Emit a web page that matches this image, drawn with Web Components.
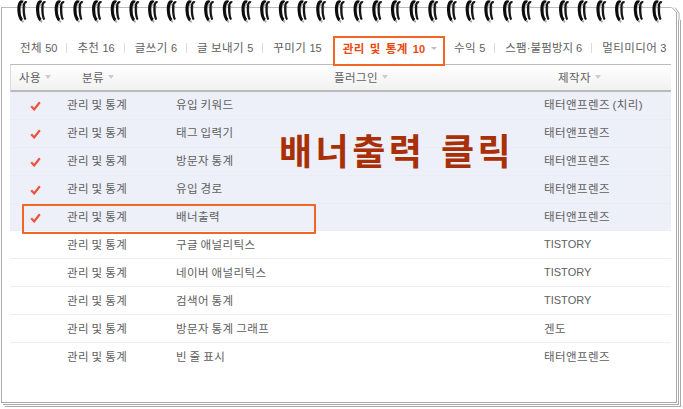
<!DOCTYPE html>
<html lang="ko">
<head>
<meta charset="utf-8">
<title>플러그인</title>
<style>
	html, body { margin: 0; background: #fff; }
	body { width: 683px; height: 409px; overflow: hidden; font-family: "Liberation Sans", "Noto Sans CJK KR", sans-serif; }
</style>
</head>
<body>
<note-paper>
	<plugin-tabs>
		<tab-item>전체 <b>50</b></tab-item>
		<tab-item>추천 <b>16</b></tab-item>
		<tab-item>글쓰기 <b>6</b></tab-item>
		<tab-item>글 보내기 <b>5</b></tab-item>
		<tab-item last>꾸미기 <b>15</b></tab-item>
		<tab-item active>관리 및 통계 <b>10</b></tab-item>
		<tab-item style="padding-left:9px">수익 <b>5</b></tab-item>
		<tab-item style="letter-spacing:.1px">스팸·불펌방지 <b>6</b></tab-item>
		<tab-item last>멀티미디어 <b>3</b></tab-item>
	</plugin-tabs>
	<plugin-table>
		<plugin-row on name="유입 키워드" by="태터앤프렌즈 (치리)"></plugin-row>
		<plugin-row on name="태그 입력기" by="태터앤프렌즈"></plugin-row>
		<plugin-row on name="방문자 통계" by="태터앤프렌즈"></plugin-row>
		<plugin-row on name="유입 경로" by="태터앤프렌즈"></plugin-row>
		<plugin-row on mark name="배너출력" by="태터앤프렌즈"></plugin-row>
		<plugin-row name="구글 애널리틱스" by="TISTORY"></plugin-row>
		<plugin-row name="네이버 애널리틱스" by="TISTORY"></plugin-row>
		<plugin-row name="검색어 통계" by="TISTORY"></plugin-row>
		<plugin-row name="방문자 통계 그래프" by="겐도"></plugin-row>
		<plugin-row name="빈 줄 표시" by="태터앤프렌즈"></plugin-row>
	</plugin-table>
	<big-note>배너출력 클릭</big-note>
</note-paper>
<script>
'use strict';
((window, document) => {
	const FONT = '"Liberation Sans", "Noto Sans CJK KR", sans-serif';

	// one wire of the binding, repeated along the top edge
	class SpiralRings extends HTMLElement {
		constructor() {
			super();
			let shadowRoot = this.attachShadow({mode: 'open'});
			let wires = '';
			for (let i = 0; i < 35; i++) {
				let x = (i * 18.68 - 0.5).toFixed(2);
				wires += `<g transform="translate(${x} 0)">
					<path d="M24 5C21 3 20 8 20.4 13C20.8 18 21.5 21 24 22" stroke="#aaa" stroke-width="2" fill="none"/>
					<path d="M26 6C24.5 9 25 15 26 20" stroke="#aaa" stroke-width="1.4" fill="none"/>
					<path d="M23.5 2C20.5 0.5 19 5 19.4 11C19.7 15 20.5 18.5 22.5 20" stroke="#0c0c0c" stroke-width="3" fill="none"/>
					<path d="M27.3 2.5C24.6 1 23.8 6 24.2 11C24.4 14.5 24.8 17.5 26 19.5" stroke="#151515" stroke-width="2.2" fill="none"/>
				</g>`;
			}
			shadowRoot.innerHTML = `
			<style>
				:host { display: block; position: absolute; left: 0; top: 0; width: 683px; height: 24px; }
				svg { display: block; }
			</style>
			<svg width="683" height="24" viewBox="0 0 683 24">${wires}</svg>
			`;
		}
	}

	class NotePaper extends HTMLElement {
		constructor() {
			super();
			let shadowRoot = this.attachShadow({mode: 'open'});
			shadowRoot.innerHTML = `
			<style>
				:host { display: block; position: relative; width: 683px; height: 409px; font-family: ${FONT}; }
				#sheet {
					position: absolute;
					left: 1px;
					top: 7px;
					width: 674px;
					height: 394px;
					border: 1px solid #aaa;
					border-top-color: #bbb;
					background: #fff;
					box-shadow: 1px 1px 0 #fff, 2px 2px 0 #aaa, 3px 3px 0 #fff, 4px 4px 0 #aaa;
				}
				#body { padding: 28px 4px 0 8px; }
				/* dog-ear on the top right corner */
				#ear { position: absolute; left: 668px; top: 4px; }
			</style>
			<div id="sheet"><div id="body"><slot></slot></div></div>
			<svg id="ear" width="15" height="16" viewBox="0 0 15 16">
				<path d="M3 3L15 3L15 16L8.5 16L8.5 8Z" fill="#fff"/>
				<path d="M4 3.5L8.5 8.5L8.5 16M7 3.5L11 9L11 16" stroke="#aaa" fill="none"/>
			</svg>
			<spiral-rings></spiral-rings>
			`;
		}
	}

	class PluginTabs extends HTMLElement {
		constructor() {
			super();
			let shadowRoot = this.attachShadow({mode: 'open'});
			shadowRoot.innerHTML = `
			<style>
				:host { display: flex; align-items: flex-start; height: 28px; white-space: nowrap; }
			</style>
			<slot></slot>
			`;
		}
	}

	class TabItem extends HTMLElement {
		constructor() {
			super();
			let shadowRoot = this.attachShadow({mode: 'open'});
			let active = this.hasAttribute('active');
			shadowRoot.innerHTML = `
			<style>
				:host {
					display: flex;
					align-items: center;
					position: relative;
					height: 28px;
					box-sizing: border-box;
					padding: 0 10px 6px;
					font-size: 11.5px;
					letter-spacing: .42px;
					word-spacing: -.5px;
					color: #606060;
				}
				:host([active]) {
					z-index: 1;
					height: 30px;
					margin-left: 1px;
					color: #e8490f;
					font-weight: bold;
					word-spacing: 1.4px;
					border: 2px solid #f26522;
					padding: 0 6px 6px 8px;
				}
				::slotted(b) { font-weight: normal; font-size: 11px; letter-spacing: 0; }
				:host([active]) ::slotted(b) { font-weight: bold; }
				:host(:not([active]):not([last])) #sep { display: block; }
				#sep { display: none; position: absolute; right: 0; top: 7px; width: 1px; height: 10px; background: #ddd; }
				#caret { width: 0; height: 0; margin-left: 6px; border: 3px solid transparent; border-top: 3px solid #bbb; border-bottom: 0; }
			</style>
			<span><slot></slot></span>${active ? '<i id="caret"></i>' : ''}<i id="sep"></i>
			`;
		}
	}

	class PluginTable extends HTMLElement {
		constructor() {
			super();
			let shadowRoot = this.attachShadow({mode: 'open'});
			shadowRoot.innerHTML = `
			<style>
				:host { display: block; width: 661px; font-size: 11.5px; letter-spacing: .42px; color: #606060; }
				#head {
					display: grid;
					grid-template-columns: 71px 252px 224px 1fr;
					align-items: center;
					height: 25px;
					border: solid #bbb;
					border-width: 1px 0 2px 0;
					border-left: 1px solid #ddd;
					background: linear-gradient(#fff, #f1f1f1);
				}
				#head span { display: flex; align-items: center; gap: 4px; position: relative; top: -1px; }
				#head span:first-child { padding-left: 8px; }
				#head i { width: 0; height: 0; border: 3.5px solid transparent; border-top: 4px solid #ccc; border-bottom: 0; }
			</style>
			<div id="head">
				<span>사용<i></i></span>
				<span>분류<i></i></span>
				<span>플러그인<i></i></span>
				<span>제작자<i></i></span>
			</div>
			<slot></slot>
			`;
		}
	}

	class PluginRow extends HTMLElement {
		constructor() {
			super();
			let shadowRoot = this.attachShadow({mode: 'open'});
			let check = this.hasAttribute('on')
				? '<svg width="11" height="10" viewBox="0 0 11 10"><path d="M1.2 5.2L4.2 8.4L9.8 1.2" fill="none" stroke="#f0503c" stroke-width="2.2"/></svg>'
				: '';
			let by = this.getAttribute('by');
			let latin = /^[A-Z]+$/.test(by);
			shadowRoot.innerHTML = `
			<style>
				:host {
					display: grid;
					grid-template-columns: 47px 109px 368px 1fr;
					align-items: center;
					position: relative;
					height: 27.9px;
					box-sizing: border-box;
					border-bottom: 1px solid #eee;
					font-size: 11.5px;
					letter-spacing: .42px;
					word-spacing: -1px;
					color: #606060;
				}
				:host([on]) { background: #edeff9; border-bottom-color: #e9ebf5; }
				:host(:last-child) { border-bottom: 0; }
				#use { display: flex; justify-content: flex-end; padding: 1px 16px 0 0; }
				#mark { display: none; position: absolute; left: 12px; top: 0; width: 294px; height: 30px; box-sizing: border-box; border: 2px solid #f26522; border-radius: 1px; }
				:host([mark]) #mark { display: block; }
				span { position: relative; top: -1px; margin-left: 10px; }
				.latin { font-size: 11px; letter-spacing: 0; }
			</style>
			<div id="use">${check}</div>
			<span>관리 및 통계</span>
			<span>${this.getAttribute('name')}</span>
			<span${latin ? ' class="latin"' : ''}>${by}</span>
			<i id="mark"></i>
			`;
		}
	}

	class BigNote extends HTMLElement {
		constructor() {
			super();
			let shadowRoot = this.attachShadow({mode: 'open'});
			shadowRoot.innerHTML = `
			<style>
				:host {
					position: absolute;
					left: 277px;
					top: 120px;
					font-size: 36px;
					line-height: 50px;
					letter-spacing: 3.5px;
					word-spacing: 2px;
					font-weight: bold;
					color: #a93006;
					white-space: nowrap;
				}
			</style>
			<slot></slot>
			`;
		}
	}

	[['spiral-rings', SpiralRings], ['note-paper', NotePaper], ['plugin-tabs', PluginTabs], ['tab-item', TabItem],
		['plugin-table', PluginTable], ['plugin-row', PluginRow], ['big-note', BigNote]]
		.forEach(([name, cls]) => window.customElements.define(name, cls));
})(this, document);
</script>
</body>
</html>
